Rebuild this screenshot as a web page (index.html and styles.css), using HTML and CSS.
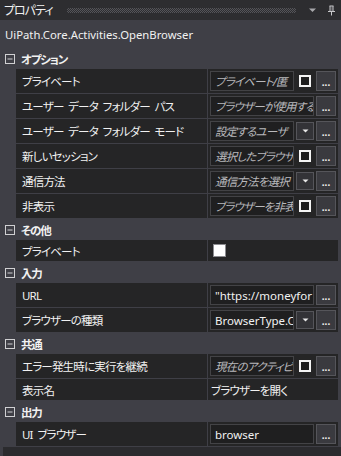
FILE: index.html
```html
<!DOCTYPE html>
<html lang="ja">
<head>
<meta charset="utf-8">
<link rel="stylesheet" href="styles.css">
</head>
<body>
<div class="panel">
  <div class="titlebar">
    <span class="title">プロパティ</span>
    <span class="grip"></span>
    <svg class="tb-icon" width="9" height="6" viewBox="0 0 9 6"><path d="M1 1.5h7L4.5 5z" fill="#a8a8ab"/></svg>
    <svg class="tb-icon pin" width="9" height="11" viewBox="0 0 9 11"><path d="M1 6.5h7M2.5 1h4M3 1v5.5M6 1v5.5M4.5 6.5V10.5" stroke="#c8c8cb" stroke-width="1" fill="none"/><path d="M3.5 1.5h2v5h-2z" fill="#c8c8cb" opacity="0.25"/></svg>
  </div>
  <div class="subject">UiPath.Core.Activities.OpenBrowser</div>

  <div class="cat"><svg class="toggle" width="10" height="10" viewBox="0 0 10 10"><rect x="0.5" y="0.5" width="9" height="9" fill="none" stroke="#d0d0d2"/><path d="M2.5 5h5" stroke="#d0d0d2"/></svg>オプション</div>
  <div class="row">
    <div class="name">プライベート</div>
    <div class="value">
      <div class="tbox ph">プライベート/匿</div>
      <div class="slot"><span class="chk"></span></div>
      <div class="btn">...</div>
    </div>
  </div>
  <div class="row">
    <div class="name">ユーザー データ フォルダー パス</div>
    <div class="value">
      <div class="tbox ph wide">ブラウザーが使用する</div>
      <div class="btn">...</div>
    </div>
  </div>
  <div class="row">
    <div class="name">ユーザー データ フォルダー モード</div>
    <div class="value">
      <div class="tbox ph">設定するユーザ</div>
      <div class="dd"><svg width="7" height="4" viewBox="0 0 7 4"><path d="M0.5 0.5h6L3.5 3.5z" fill="#e8e8e8"/></svg></div>
      <div class="btn">...</div>
    </div>
  </div>
  <div class="row">
    <div class="name">新しいセッション</div>
    <div class="value">
      <div class="tbox ph">選択したブラウザ</div>
      <div class="slot"><span class="chk"></span></div>
      <div class="btn">...</div>
    </div>
  </div>
  <div class="row">
    <div class="name">通信方法</div>
    <div class="value">
      <div class="tbox ph">通信方法を選択</div>
      <div class="dd"><svg width="7" height="4" viewBox="0 0 7 4"><path d="M0.5 0.5h6L3.5 3.5z" fill="#e8e8e8"/></svg></div>
      <div class="btn">...</div>
    </div>
  </div>
  <div class="row">
    <div class="name">非表示</div>
    <div class="value">
      <div class="tbox ph">ブラウザーを非表</div>
      <div class="slot"><span class="chk"></span></div>
      <div class="btn">...</div>
    </div>
  </div>

  <div class="cat"><svg class="toggle" width="10" height="10" viewBox="0 0 10 10"><rect x="0.5" y="0.5" width="9" height="9" fill="none" stroke="#d0d0d2"/><path d="M2.5 5h5" stroke="#d0d0d2"/></svg>その他</div>
  <div class="row plain">
    <div class="name">プライベート</div>
    <div class="value"><span class="chk on"></span></div>
  </div>

  <div class="cat"><svg class="toggle" width="10" height="10" viewBox="0 0 10 10"><rect x="0.5" y="0.5" width="9" height="9" fill="none" stroke="#d0d0d2"/><path d="M2.5 5h5" stroke="#d0d0d2"/></svg>入力</div>
  <div class="row">
    <div class="name">URL</div>
    <div class="value">
      <div class="tbox wide">"https://moneyfor</div>
      <div class="btn">...</div>
    </div>
  </div>
  <div class="row">
    <div class="name">ブラウザーの種類</div>
    <div class="value">
      <div class="tbox">BrowserType.C</div>
      <div class="dd"><svg width="7" height="4" viewBox="0 0 7 4"><path d="M0.5 0.5h6L3.5 3.5z" fill="#e8e8e8"/></svg></div>
      <div class="btn">...</div>
    </div>
  </div>

  <div class="cat"><svg class="toggle" width="10" height="10" viewBox="0 0 10 10"><rect x="0.5" y="0.5" width="9" height="9" fill="none" stroke="#d0d0d2"/><path d="M2.5 5h5" stroke="#d0d0d2"/></svg>共通</div>
  <div class="row">
    <div class="name">エラー発生時に実行を継続</div>
    <div class="value">
      <div class="tbox ph">現在のアクティビ</div>
      <div class="slot"><span class="chk"></span></div>
      <div class="btn">...</div>
    </div>
  </div>
  <div class="row plain">
    <div class="name">表示名</div>
    <div class="value"><span class="plain-text">ブラウザーを開く</span></div>
  </div>

  <div class="cat"><svg class="toggle" width="10" height="10" viewBox="0 0 10 10"><rect x="0.5" y="0.5" width="9" height="9" fill="none" stroke="#d0d0d2"/><path d="M2.5 5h5" stroke="#d0d0d2"/></svg>出力</div>
  <div class="row">
    <div class="name">UI ブラウザー</div>
    <div class="value">
      <div class="tbox wide">browser</div>
      <div class="btn">...</div>
    </div>
  </div>
  <div class="footer"></div>
</div>
</body>
</html>
```

FILE: styles.css
```css
html, body {
  margin: 0;
  padding: 0;
  background: #3f3f46;
}
body {
  width: 341px;
  height: 456px;
  overflow: hidden;
  font-family: "Noto Sans", "Noto Sans CJK JP", sans-serif;
  font-size: 11.5px;
  font-feature-settings: "palt" 1;
  color: #f1f1f1;
}
.panel {
  display: flex;
  flex-direction: column;
  height: 456px;
}
.titlebar {
  height: 20px;
  background: #2d2d30;
  display: flex;
  align-items: center;
  padding: 0 5px 0 4px;
  gap: 6px;
}
.title {
  font-size: 12px;
  letter-spacing: -1px;
  color: #f1f1f1;
  margin-right: 8px;
}
.grip {
  flex: 1;
  height: 5px;
  margin-top: 1px;
  margin-right: 6px;
  background: conic-gradient(#55555a 25%, transparent 0 50%, #55555a 0 75%, transparent 0) 0 0 / 2px 2px;
}
.tb-icon { display: block; }
.pin { margin-left: 4px; }
.subject {
  height: 28px;
  display: flex;
  align-items: center;
  padding-left: 5px;
  font-size: 11.3px;
  color: #f1f1f1;
}
.cat {
  height: 21px;
  display: flex;
  align-items: center;
  padding-left: 5px;
  gap: 6px;
  font-weight: bold;
  font-size: 11.5px;
  letter-spacing: -1.2px;
  color: #f1f1f1;
}
.toggle { display: block; }
.row {
  height: 24px;
  margin: 0 3px 1px 16px;
  display: flex;
  background: #252526;
}
.row.plain { height: 21px; }
.name {
  width: 192px;
  flex: none;
  border-right: 1px solid #3f3f46;
  display: flex;
  align-items: center;
  padding-left: 6px;
  box-sizing: border-box;
  white-space: pre;
  overflow: hidden;
  letter-spacing: -0.8px;
  word-spacing: 2.5px;
}
.value {
  flex: 1;
  min-width: 0;
  display: flex;
  align-items: center;
  gap: 2px;
  padding: 0 1px 0 2px;
}
.tbox {
  width: 84px;
  flex: none;
  height: 20px;
  box-sizing: border-box;
  border: 1px solid #434346;
  background: #1f1f20;
  display: flex;
  align-items: center;
  padding-left: 4px;
  white-space: nowrap;
  overflow: hidden;
  color: #f1f1f1;
}
.tbox.wide { width: 104px; }
.tbox.ph {
  font-style: italic;
  color: #b8b8bc;
  letter-spacing: -0.8px;
}
.slot {
  width: 18px;
  height: 20px;
  flex: none;
  display: flex;
  align-items: center;
  justify-content: center;
}
.chk {
  width: 12px;
  height: 12px;
  box-sizing: border-box;
  border: 2px solid #f4f4f4;
  background: #1e1e1e;
  display: block;
}
.chk.on {
  width: 13px;
  height: 13px;
  border: 1px solid #8c8c90;
  background: #ffffff;
  margin-left: 3px;
}
.dd {
  width: 18px;
  height: 18px;
  flex: none;
  box-sizing: border-box;
  border: 1px solid #55555a;
  background: #333337;
  display: flex;
  justify-content: center;
  padding-top: 6px;
}
.dd svg { display: block; }
.btn {
  width: 20px;
  height: 20px;
  flex: none;
  box-sizing: border-box;
  border: 1px solid #55555a;
  background: #3a3a3f;
  color: #f1f1f1;
  font-size: 10px;
  line-height: 1;
  display: flex;
  justify-content: center;
  align-items: flex-end;
  padding-bottom: 3px;
  font-weight: bold;
}
.plain-text {
  padding-left: 1px;
  letter-spacing: -0.8px;
}
.footer {
  flex: 1;
  margin-left: 3px;
  background: #2b2b2e;
}
```
